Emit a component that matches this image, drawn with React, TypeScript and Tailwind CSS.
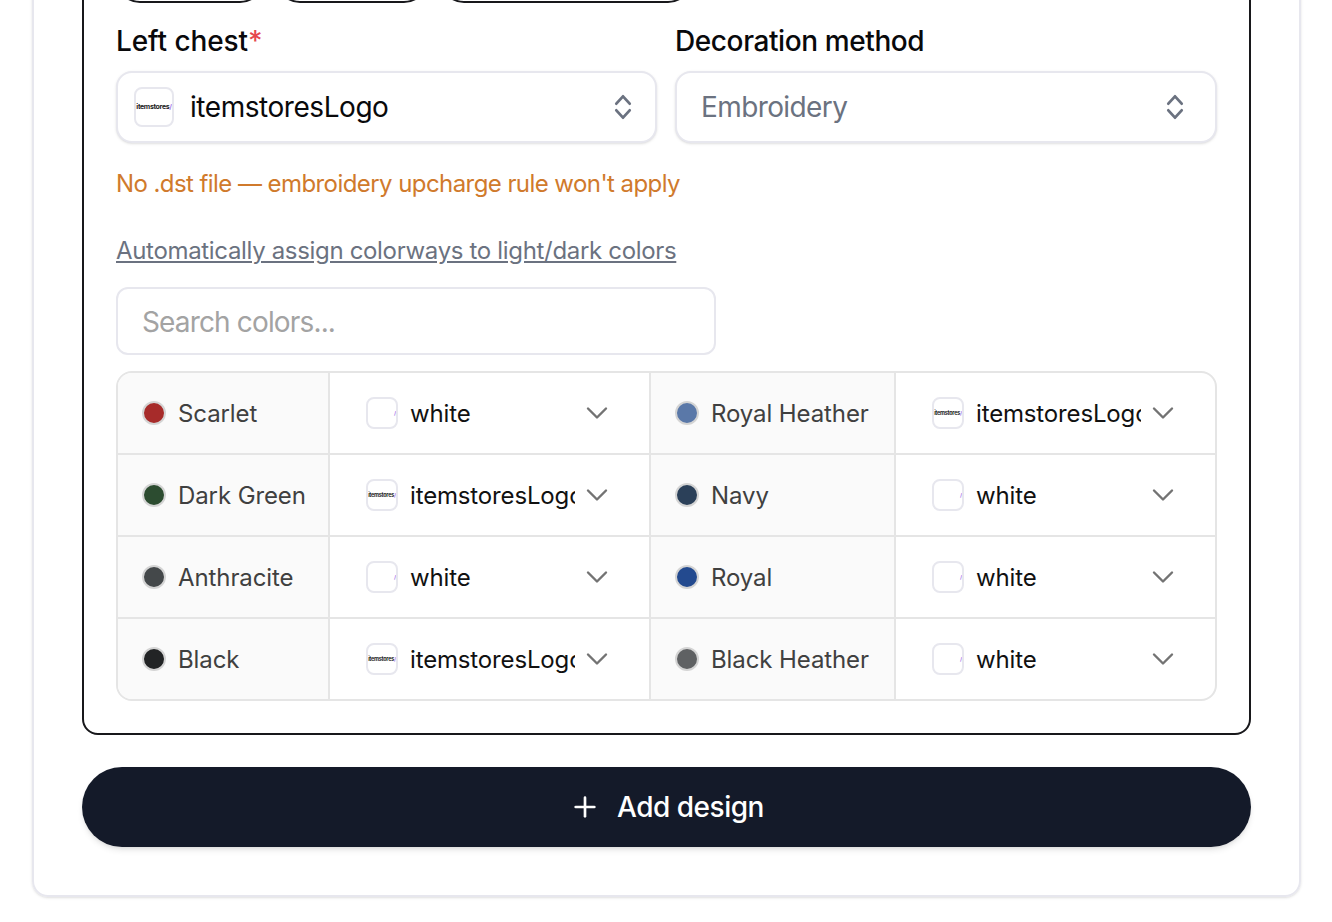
import React from 'react'
import { ChevronDown, Plus } from 'lucide-react'

const font = 'font-["Inter","Liberation_Sans",sans-serif]'

type Row = { name: string; color: string; logo: 'white' | 'itemstoresLogo' }

const rows: [Row, Row][] = [
  [
    { name: 'Scarlet', color: 'bg-[#a72b2a]', logo: 'white' },
    { name: 'Royal Heather', color: 'bg-[#5a78a8]', logo: 'itemstoresLogo' },
  ],
  [
    { name: 'Dark Green', color: 'bg-[#2c4c30]', logo: 'itemstoresLogo' },
    { name: 'Navy', color: 'bg-[#2b4059]', logo: 'white' },
  ],
  [
    { name: 'Anthracite', color: 'bg-[#44484a]', logo: 'white' },
    { name: 'Royal', color: 'bg-[#234a8f]', logo: 'white' },
  ],
  [
    { name: 'Black', color: 'bg-[#222425]', logo: 'itemstoresLogo' },
    { name: 'Black Heather', color: 'bg-[#5f6163]', logo: 'white' },
  ],
]

const UpDown = () => (
  <svg viewBox="0 0 24 24" fill="none" stroke="#6b7280" strokeWidth={2.1} strokeLinecap="round" strokeLinejoin="round" className="ml-auto h-8 w-8 shrink-0">
    <path d="M7 9.5l5-5.5 5 5.5" />
    <path d="M7 14.5l5 5.5 5-5.5" />
  </svg>
)

const Thumb = ({ logo, big }: { logo: string; big?: boolean }) => (
  <span
    className={`flex shrink-0 items-center justify-center overflow-hidden border-2 border-[#e7e7ee] bg-white ${
      big ? 'h-10 w-10 rounded-lg' : 'h-8 w-8 rounded-lg'
    }`}
  >
    <span
      className={`whitespace-nowrap font-bold tracking-tighter ${big ? 'text-[7px]' : 'text-[5.5px]'} ${
        logo === 'white' ? 'text-white' : 'text-[#222]'
      }`}
    >
      itemstores<span className="text-[#a77bea]">/</span>
    </span>
  </span>
)

const ColorCell = ({ row, wide }: { row: Row; wide: number }) => (
  <div className={`flex shrink-0 items-center gap-3 bg-[#fafafa] pl-6 ${wide === 0 ? 'w-[210px]' : 'w-[243px]'}`}>
    <span className={`h-6 w-6 shrink-0 rounded-full border-2 border-[#d4d4d4] ${row.color}`} />
    <span className="mt-[2px] whitespace-nowrap text-2xl tracking-[-0.1px] text-[#404040]">{row.name}</span>
  </div>
)

const LogoCell = ({ row, wide }: { row: Row; wide: number }) => (
  <div className={`flex min-w-0 items-center pl-[36px] pr-[34px] ${wide === 0 ? 'w-[319px]' : 'flex-1'}`}>
    <Thumb logo={row.logo} />
    <span className="ml-3 mt-[2px] w-[165px] overflow-hidden whitespace-nowrap text-2xl tracking-[-0.15px] text-[#111]">{row.logo}</span>
    <ChevronDown className="ml-auto h-9 w-9 shrink-0 text-[#737373]" strokeWidth={1.6} />
  </div>
)

export default function App() {
  return (
    <div className={`h-[922px] overflow-hidden bg-white ${font}`}>
      <div className="ml-[32px] mr-[31px] mt-[-419px] rounded-b-2xl border-2 border-[#e7e7ee] px-[48px] pb-[48px] pt-[200px] shadow-sm">
        <div className="rounded-2xl border-2 border-[#18181b] px-8 pb-8 pt-[170px]">
          {/* Pills cut off by the top of the page */}
          <div className="mb-5 flex gap-3">
            <div className="h-12 w-[148px] rounded-full border-2 border-[#18181b]" />
            <div className="h-12 w-[152px] rounded-full border-2 border-[#18181b]" />
            <div className="h-12 w-[252px] rounded-full border-2 border-[#18181b]" />
          </div>

          <div className="grid grid-cols-[541px_1fr] gap-[18px]">
            <div>
              <div className="text-[28px] font-medium leading-9 tracking-[-0.1px] text-[#09090b]">
                Left chest<span className="text-[#e5484d]">*</span>
              </div>
              <div className="mt-3 flex h-[72px] items-center rounded-2xl border-2 border-[#e7e7ee] bg-white pl-4 pr-4 shadow-sm">
                <Thumb logo="itemstoresLogo" big />
                <span className="ml-4 text-[28px] tracking-[-0.45px] text-[#09090b]">itemstoresLogo</span>
                <UpDown />
              </div>
            </div>
            <div>
              <div className="text-[28px] font-medium leading-9 tracking-[-0.4px] text-[#09090b]">Decoration method</div>
              <div className="mt-3 flex h-[72px] items-center rounded-2xl border-2 border-[#e7e7ee] bg-white pl-6 pr-6 shadow-sm">
                <span className="text-[28px] tracking-[-0.6px] text-[#6b7280]">Embroidery</span>
                <UpDown />
              </div>
            </div>
          </div>

          <p className="mt-[25px] text-2xl leading-8 tracking-[-0.57px] text-[#d07a2c]">No .dst file — embroidery upcharge rule won't apply</p>
          <a className="mt-[35px] block text-2xl leading-8 tracking-[-0.33px] text-[#6b7280] underline">
            Automatically assign colorways to light/dark colors
          </a>

          <input
            readOnly
            placeholder="Search colors..."
            className="mt-[20px] block h-[68px] w-[600px] rounded-xl border-2 border-[#e7e7ee] bg-white px-6 pt-[2px] text-[28px] tracking-[-0.85px] outline-none placeholder:text-[#a3a3a3]"
          />

          <div className="mt-4 overflow-hidden rounded-2xl border-2 border-[#e5e5e5]">
            {rows.map((pair, i) => (
              <div key={i} className={`flex ${i > 0 ? 'h-[82px] border-t-2 border-[#e5e5e5]' : 'h-20'}`}>
                <ColorCell row={pair[0]} wide={0} />
                <div className="w-[2px] shrink-0 bg-[#e5e5e5]" />
                <LogoCell row={pair[0]} wide={0} />
                <div className="w-[2px] shrink-0 bg-[#e5e5e5]" />
                <ColorCell row={pair[1]} wide={1} />
                <div className="w-[2px] shrink-0 bg-[#e5e5e5]" />
                <LogoCell row={pair[1]} wide={1} />
              </div>
            ))}
          </div>
        </div>

        <button className="mt-8 flex h-20 w-full items-center justify-center gap-4 rounded-full bg-[#141a29] text-[28px] font-medium tracking-[-0.5px] text-white shadow-md">
          <Plus className="h-8 w-8" strokeWidth={2} />
          Add design
        </button>
      </div>
    </div>
  )
}
